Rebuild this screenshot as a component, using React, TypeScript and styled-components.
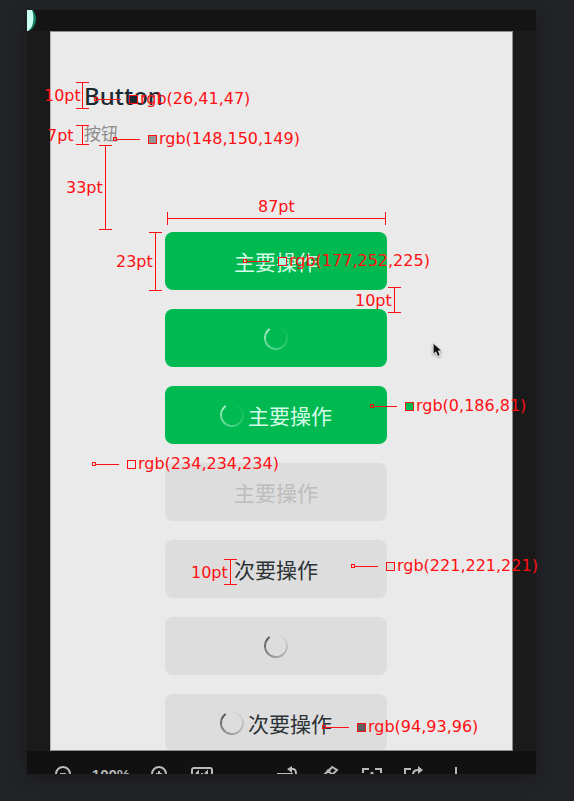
import React from "react";
import styled, { createGlobalStyle } from "styled-components";

const GlobalStyle = createGlobalStyle`
  * { box-sizing: border-box; }
  html, body { margin: 0; background: #222327; }
  body { font-family: "Noto Sans", "Noto Sans CJK SC", sans-serif; }
  button { font: inherit; border: 0; margin: 0; padding: 0; background: none; color: inherit; }
`;

const RED = "#ff0f12";

const Page = styled.main`
  display: flex;
  height: 100vh;
  padding: 10px 38px 27px 27px;
`;

const Frame = styled.section`
  position: relative;
  flex: 1;
  min-width: 0;
  display: flex;
  flex-direction: column;
  background: #1a1a1a;
  box-shadow: 0 4px 16px rgba(0, 0, 0, 0.25);
`;

const TopBar = styled.header`
  flex: none;
  height: 21px;
  background: #141414;
`;

const Avatar = styled.svg`
  display: block;
  width: 9px;
  height: 21px;
`;

const Screen = styled.div`
  flex: 1;
  min-height: 0;
  overflow: hidden;
  margin: 0 23px;
  padding: 49px 33px 0;
  background: #eaeaea;
  border: 1px solid #8c8c8c;
  border-left-color: #b4b4b4;
`;

const Title = styled.h1`
  margin: 0;
  font-size: 24px;
  line-height: 30px;
  font-weight: 500;
  color: rgb(26, 41, 47);
`;

const Subtitle = styled.p`
  margin: 10px 0 0;
  font-family: "Noto Sans CJK SC", sans-serif;
  font-size: 17px;
  line-height: 24px;
  color: #8a8c8b;
`;

const ButtonList = styled.div`
  display: flex;
  flex-direction: column;
  gap: 19px;
  margin: 87px 0 0 81px;
`;

type Tone = "primary" | "disabled" | "secondary";

const tones: Record<Tone, { bg: string; fg: string }> = {
  primary: { bg: "rgb(0, 186, 81)", fg: "#d4fbe8" },
  disabled: { bg: "rgb(221, 221, 221)", fg: "#bcbcbc" },
  secondary: { bg: "rgb(221, 221, 221)", fg: "#2b3134" },
};

const ActionButton = styled.button<{ $tone: Tone }>`
  display: flex;
  flex: none;
  align-items: center;
  justify-content: center;
  gap: 4px;
  width: 222px;
  height: 58px;
  border-radius: 8px;
  background: ${(p) => tones[p.$tone].bg};
  color: ${(p) => tones[p.$tone].fg};
  font-family: "Noto Sans CJK SC", sans-serif;
  font-size: 21px;
  line-height: 28px;
`;

const SpinnerSvg = styled.svg`
  display: block;
  width: 24px;
  height: 24px;
`;

const SEGMENTS = 24;

function Spinner() {
  const point = (deg: number) => {
    const a = (deg * Math.PI) / 180;
    return `${(12 + 11 * Math.sin(a)).toFixed(2)} ${(12 - 11 * Math.cos(a)).toFixed(2)}`;
  };
  const step = 330 / SEGMENTS;
  return (
    <SpinnerSvg viewBox="0 0 24 24" fill="none" stroke="currentColor" strokeWidth="2" aria-hidden="true">
      {Array.from({ length: SEGMENTS }, (_, i) => (
        <path
          key={i}
          d={`M${point(325 - i * step)} A11 11 0 0 0 ${point(325 - (i + 1) * step)}`}
          opacity={0.8 * Math.pow(1 - i / SEGMENTS, 1.5)}
        />
      ))}
    </SpinnerSvg>
  );
}

const ToolBar = styled.footer`
  display: flex;
  flex: none;
  gap: 12px;
  height: 23px;
  padding: 15px 0 0 24px;
  overflow: hidden;
  background: #111111;
  color: #b9b9b9;
`;

const ToolGroup = styled.div<{ $right?: boolean }>`
  display: flex;
  gap: ${(p) => (p.$right ? 18 : 12)}px;
  margin-left: ${(p) => (p.$right ? 43 : 0)}px;
`;

const ToolButton = styled.button<{ $wide?: boolean }>`
  display: flex;
  justify-content: center;
  width: ${(p) => (p.$wide ? 38 : 24)}px;
  height: 24px;
`;

const ToolIcon = styled.svg`
  display: block;
  width: 24px;
  height: 24px;
  fill: none;
  stroke: currentColor;
  stroke-width: 2;
`;

const ZoomLevel = styled.span`
  width: 48px;
  padding-top: 1px;
  text-align: center;
  font: bold 15px/16px "Liberation Sans", sans-serif;
`;

function Tool({ label, wide, children }: { label: string; wide?: boolean; children: React.ReactNode }) {
  return (
    <ToolButton type="button" aria-label={label} $wide={wide}>
      <ToolIcon viewBox="0 0 24 24">{children}</ToolIcon>
    </ToolButton>
  );
}

/* Notes laid freely over the mock-up, in frame coordinates */
const Canvas = styled.div`
  position: absolute;
  inset: 0;
  pointer-events: none;
  color: ${RED};
  font-family: "DejaVu Sans", sans-serif;
  font-size: 16px;
  line-height: 18px;
  white-space: nowrap;
`;

const ColourNote = styled.div<{ $x: number; $y: number }>`
  position: absolute;
  left: ${(p) => p.$x}px;
  top: ${(p) => p.$y}px;
  display: flex;
  align-items: center;
`;

const Dot = styled.i`
  width: 4px;
  height: 4px;
  border: 1px solid ${RED};
`;

const Leader = styled.i`
  width: 23px;
  height: 1px;
  background: ${RED};
`;

const Swatch = styled.i<{ $colour: string }>`
  width: 9px;
  height: 9px;
  margin: 0 2px 0 8px;
  border: 1px solid ${RED};
  background: ${(p) => p.$colour};
`;

const Measure = styled.div<{ $x: number; $y: number; $length: number; $row?: boolean }>`
  position: absolute;
  left: ${(p) => p.$x}px;
  top: ${(p) => p.$y}px;
  width: ${(p) => (p.$row ? p.$length : 13)}px;
  height: ${(p) => (p.$row ? 13 : p.$length)}px;
  border: 0 solid ${RED};
  border-width: ${(p) => (p.$row ? "0 1px" : "1px 0")};
  background: linear-gradient(${RED}, ${RED}) center / ${(p) => (p.$row ? "100% 1px" : "1px 100%")} no-repeat;
`;

const MeasureLabel = styled.span<{ $x: number; $y: number }>`
  position: absolute;
  left: ${(p) => p.$x}px;
  top: ${(p) => p.$y}px;
`;

const Cursor = styled.svg`
  position: absolute;
  left: 405px;
  top: 332px;
  width: 12px;
  height: 17px;
  filter: drop-shadow(0 1px 1px rgba(0, 0, 0, 0.35));
`;

const buttons: { tone: Tone; label?: string; loading?: boolean }[] = [
  { tone: "primary", label: "主要操作" },
  { tone: "primary", loading: true },
  { tone: "primary", label: "主要操作", loading: true },
  { tone: "disabled", label: "主要操作" },
  { tone: "secondary", label: "次要操作" },
  { tone: "secondary", loading: true },
  { tone: "secondary", label: "次要操作", loading: true },
];

const colours = [
  { x: 67, y: 80, value: "26,41,47" },
  { x: 86, y: 120, value: "148,150,149" },
  { x: 216, y: 242, value: "177,252,225" },
  { x: 343, y: 387, value: "0,186,81" },
  { x: 65, y: 445, value: "234,234,234" },
  { x: 324, y: 547, value: "221,221,221" },
  { x: 295, y: 708, value: "94,93,96" },
];

const measures = [
  { x: 49, y: 72, length: 27, label: "10pt", lx: 17, ly: 77 },
  { x: 49, y: 115, length: 20, label: "7pt", lx: 20, ly: 117 },
  { x: 72, y: 135, length: 85, label: "33pt", lx: 39, ly: 169 },
  { x: 140, y: 202, length: 219, label: "87pt", lx: 231, ly: 188, row: true },
  { x: 122, y: 222, length: 59, label: "23pt", lx: 89, ly: 243 },
  { x: 361, y: 277, length: 26, label: "10pt", lx: 328, ly: 282 },
  { x: 197, y: 549, length: 26, label: "10pt", lx: 164, ly: 554 },
];

export default function App() {
  return (
    <>
      <GlobalStyle />
      <Page>
        <Frame>
          <TopBar>
            <Avatar viewBox="0 0 9 21" aria-hidden="true">
              <path d="M0 0H6C8 3 9 6 9 9C9 14 6 19 2 21H0Z" fill="#147d62" />
              <path d="M0 0H5C7 5 7 13 4 18L1 21H0Z" fill="#c9fff2" />
            </Avatar>
          </TopBar>
          <Screen>
            <Title>Button</Title>
            <Subtitle>按钮</Subtitle>
            <ButtonList>
              {buttons.map((b, i) => (
                <ActionButton
                  key={i}
                  type="button"
                  $tone={b.tone}
                  disabled={b.tone === "disabled"}
                  aria-busy={b.loading}
                  aria-label={b.label ? undefined : "加载中"}
                >
                  {b.loading && <Spinner />}
                  {b.label}
                </ActionButton>
              ))}
            </ButtonList>
          </Screen>
          <ToolBar>
            <ToolGroup>
              <Tool label="Zoom out">
                <circle cx="12" cy="8" r="7" />
                <path d="M9 8H15" />
              </Tool>
              <ZoomLevel>100%</ZoomLevel>
              <Tool label="Zoom in">
                <circle cx="12" cy="8" r="7" />
                <path d="M9 8H15M12 5V11" />
              </Tool>
              <Tool label="Actual size" wide>
                <rect x="2" y="2" width="20" height="16" rx="2" />
                <path d="M6 8L8 6V14M15 8L17 6V14M12 7V8" />
              </Tool>
            </ToolGroup>
            <ToolGroup $right>
              <Tool label="Rotate">
                <path d="M2 8H16V20H2Z" />
                <path d="M14 3H17Q20 3 20 8" />
                <path d="M16 0L11 3L16 7Z" fill="currentColor" stroke="none" />
              </Tool>
              <Tool label="Edit">
                <path d="M6 9L12 3M9 4L15 9M11 5L14 1L19 4L14 9" />
              </Tool>
              <Tool label="Recognise text">
                <path d="M3 7V3H9M15 3H21V7M12 6L9 14M12 6L15 14" />
              </Tool>
              <Tool label="Share">
                <path d="M3 18V3H9M11 9Q11 4 16 4H18" />
                <path d="M16 0L21 4L16 8Z" fill="currentColor" stroke="none" />
              </Tool>
              <Tool label="Download">
                <path d="M12 1V16M6 11L12 17L18 11" />
              </Tool>
            </ToolGroup>
          </ToolBar>
          <Canvas>
            {measures.map((m, i) => (
              <React.Fragment key={i}>
                <Measure $x={m.x} $y={m.y} $length={m.length} $row={m.row} />
                <MeasureLabel $x={m.lx} $y={m.ly}>{m.label}</MeasureLabel>
              </React.Fragment>
            ))}
            {colours.map((c) => (
              <ColourNote key={c.value} $x={c.x} $y={c.y}>
                <Dot />
                <Leader />
                <Swatch $colour={`rgb(${c.value})`} />
                rgb({c.value})
              </ColourNote>
            ))}
            <Cursor viewBox="0 0 13 19" aria-hidden="true">
              <path d="M1 1V14L4 11L6 16L9 15L7 10H11Z" fill="#111" stroke="#f4f4f4" strokeWidth="1" />
            </Cursor>
          </Canvas>
        </Frame>
      </Page>
    </>
  );
}
